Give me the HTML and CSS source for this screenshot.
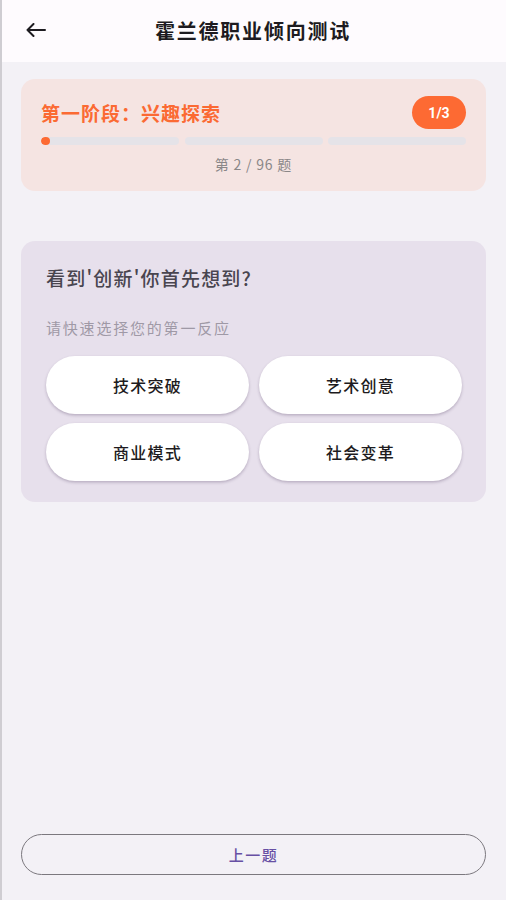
FILE: index.html
```html
<!DOCTYPE html>
<html lang="zh-CN">
<head>
<meta charset="utf-8">
<title>霍兰德职业倾向测试</title>
<link rel="stylesheet" href="styles.css">
</head>
<body>
<div class="app">
  <header class="topbar">
    <button class="back" aria-label="返回">
      <svg width="20" height="14" viewBox="0 0 20 14" fill="none" stroke="#1d1b20" stroke-width="2" stroke-linecap="round" stroke-linejoin="round"><path d="M19 7H1.5M7.5 1L1.5 7l6 6"/></svg>
    </button>
    <h1 class="title">霍兰德职业倾向测试</h1>
    <span class="spacer"></span>
  </header>

  <main class="content">
    <section class="stage-card">
      <div class="stage-row">
        <div class="stage-title">第一阶段：兴趣探索</div>
        <div class="badge">1/3</div>
      </div>
      <div class="bars">
        <div class="bar"><div class="fill" style="width:6.5%"></div></div>
        <div class="bar"></div>
        <div class="bar"></div>
      </div>
      <div class="count">第 2 / 96 题</div>
    </section>

    <section class="question-card">
      <div class="question">看到'创新'你首先想到?</div>
      <div class="hint">请快速选择您的第一反应</div>
      <div class="options">
        <button class="option">技术突破</button>
        <button class="option">艺术创意</button>
        <button class="option">商业模式</button>
        <button class="option">社会变革</button>
      </div>
    </section>

    <div class="grow"></div>

    <button class="prev">上一题</button>
  </main>
</div>
</body>
</html>
```

FILE: styles.css
```css
* { box-sizing: border-box; }
html, body { margin: 0; padding: 0; height: 100%; }
body {
  font-family: "Noto Sans CJK SC", "Noto Sans", Roboto, sans-serif;
  background: #f3f1f6;
  color: #1d1b20;
}
body::before {
  content: "";
  position: fixed;
  left: 0; top: 0; bottom: 0;
  width: 2px;
  background: #cfcdd2;
}
.app {
  min-height: 100vh;
  display: flex;
  flex-direction: column;
}
.topbar {
  height: 62px;
  background: #fefbfe;
  display: grid;
  grid-template-columns: 60px 1fr 60px;
  align-items: center;
}
.back {
  border: 0;
  background: none;
  padding: 0;
  margin-left: 26px;
  margin-top: -2px;
  width: 22px;
  height: 16px;
  display: flex;
  align-items: center;
}
.title {
  margin: 0;
  text-align: center;
  font-size: 20px;
  letter-spacing: 1.8px;
  font-weight: 700;
  color: #1d1b20;
  line-height: 28px;
}
.content {
  flex: 1;
  display: flex;
  flex-direction: column;
  padding: 17px 20px 25px 21px;
}
.stage-card {
  background: #f5e4e2;
  border-radius: 14px;
  padding: 17px 20px 17px 20px;
}
.stage-row {
  display: flex;
  align-items: center;
  justify-content: space-between;
  height: 33px;
}
.stage-title {
  color: #fb6a33;
  font-size: 19px;
  letter-spacing: 1px;
  font-weight: 700;
}
.badge {
  width: 54px;
  height: 33px;
  border-radius: 17px;
  background: #fd6a33;
  color: #fff;
  font-family: Roboto, "Noto Sans", sans-serif;
  font-weight: 700;
  font-size: 14px;
  display: flex;
  align-items: center;
  justify-content: center;
}
.bars {
  display: flex;
  gap: 5.5px;
  margin-top: 8px;
}
.bar {
  flex: 1;
  height: 8px;
  border-radius: 4px;
  background: #e5e3e8;
  overflow: hidden;
}
.fill {
  height: 100%;
  background: #fd6a33;
  border-radius: 4px;
}
.count {
  margin-top: 9px;
  text-align: center;
  font-size: 14px;
  letter-spacing: 0.8px;
  line-height: 20px;
  color: #8a8788;
}
.question-card {
  margin-top: 50px;
  background: #e7e0ec;
  border-radius: 14px;
  padding: 23px 24px 21px 25px;
}
.question {
  font-size: 19px;
  letter-spacing: 1.2px;
  line-height: 28px;
  font-weight: 500;
  color: #49454f;
}
.hint {
  margin-top: 25px;
  font-size: 15px;
  letter-spacing: 1.8px;
  line-height: 22px;
  color: #9f99a6;
}
.options {
  margin-top: 17px;
  display: grid;
  grid-template-columns: 1fr 1fr;
  column-gap: 10px;
  row-gap: 9px;
}
.option {
  height: 58px;
  border: 0;
  border-radius: 29px;
  background: #ffffff;
  box-shadow: 0 1.5px 3px rgba(60, 40, 80, 0.28);
  font-family: "Noto Sans CJK SC", "Noto Sans", sans-serif;
  font-size: 16px;
  letter-spacing: 1.2px;
  font-weight: 500;
  color: #1d1b20;
}
.grow { flex: 1; }
.prev {
  height: 41px;
  border: 1.5px solid #7b787e;
  border-radius: 21px;
  background: transparent;
  font-family: "Noto Sans CJK SC", "Noto Sans", sans-serif;
  font-size: 15px;
  letter-spacing: 1.5px;
  font-weight: 500;
  color: #6750a4;
}
```
